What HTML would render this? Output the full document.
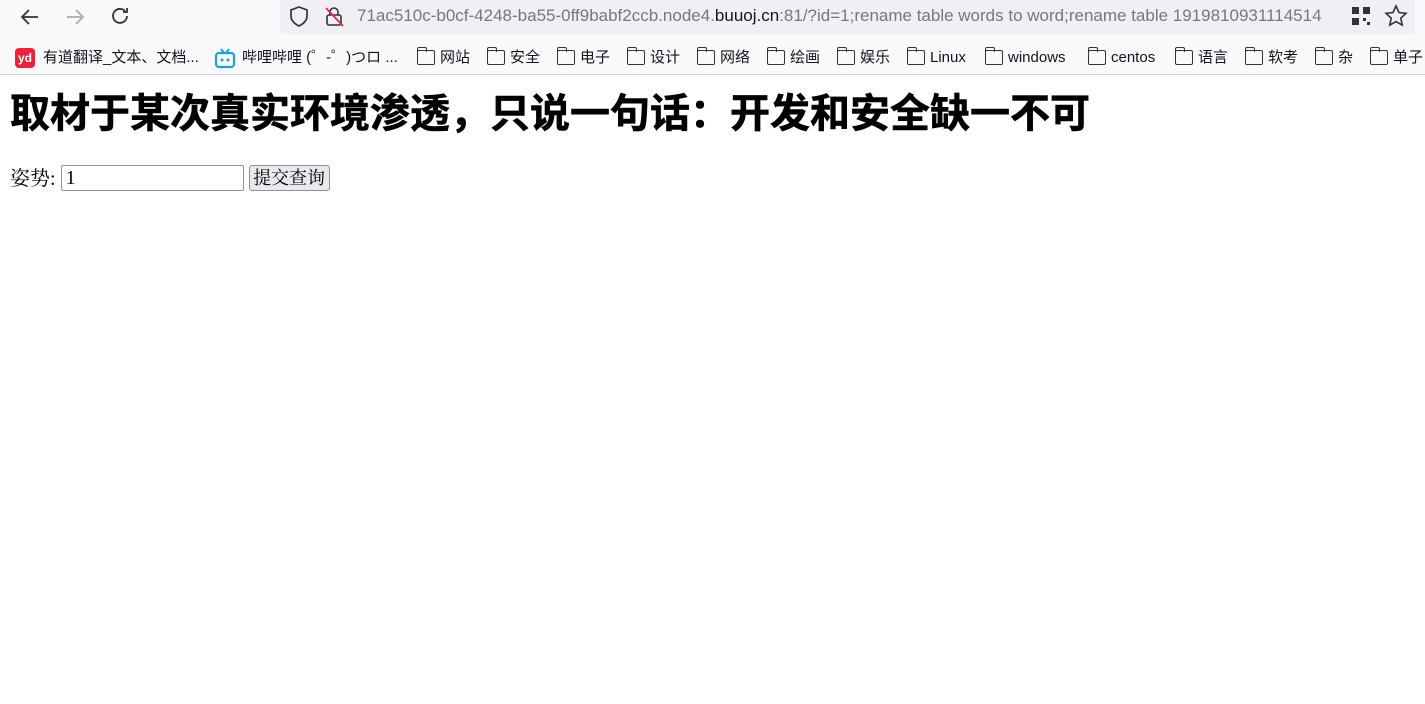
<!DOCTYPE html><html><head><meta charset="utf-8"><style>
*{margin:0;padding:0;box-sizing:border-box}
body{width:1425px;height:704px;overflow:hidden;background:#fff;font-family:"Liberation Sans","Noto Sans CJK SC",sans-serif;position:relative}
#top{position:absolute;left:0;top:0;width:1425px;height:40px;background:#f9f9fb}
#url{position:absolute;left:280px;top:0;width:1135px;height:34px;background:#f0f0f4;border-radius:0 0 6px 6px}
#bm{position:absolute;left:0;top:40px;width:1425px;height:35px;background:#f9f9fb;border-bottom:1px solid #d0d0d4}
.b{position:absolute;top:9px;font-size:15px;color:#15141a;white-space:nowrap;line-height:18px}
.f{position:absolute;top:10px;width:18px;height:15px;border:1.5px solid #333;border-radius:2px}
.f:before{content:"";position:absolute;left:-1.5px;top:-4px;width:8px;height:4px;border:1.5px solid #333;border-bottom:none;border-radius:2px 2px 0 0}
svg{position:absolute}
h1{position:absolute;left:10px;top:88px;font-size:40px;font-weight:bold;line-height:52px;white-space:nowrap;font-family:"Liberation Sans","Noto Sans CJK SC",sans-serif;-webkit-text-stroke:0.6px #000}
#form{position:absolute;left:10px;top:166px;font-size:20px;font-family:"Liberation Serif","Noto Serif CJK SC","Noto Sans CJK SC",serif;line-height:26px}
</style></head><body>
<div id="top"></div><div id="url"></div>
<svg style="left:18px;top:6px" width="24" height="22"><path d="M20 11H4M11 4l-7 7 7 7" stroke="#333" stroke-width="1.8" fill="none"/></svg>
<svg style="left:63px;top:6px" width="24" height="22"><path d="M4 11h16M13 4l7 7-7 7" stroke="#aaa" stroke-width="1.8" fill="none"/></svg>
<svg style="left:109px;top:5px" width="24" height="22"><path d="M18 11a7 7 0 1 1-2-5M18 3v4h-4" stroke="#333" stroke-width="1.8" fill="none"/></svg>
<svg style="left:288px;top:5px" width="22" height="24"><path d="M11 2l8 3v6c0 5-4 8-8 10-4-2-8-5-8-10V5z" stroke="#333" stroke-width="1.7" fill="none"/></svg>
<svg style="left:323px;top:5px" width="22" height="24"><rect x="4" y="10" width="14" height="10" rx="2" stroke="#333" stroke-width="1.6" fill="none"/><path d="M7 10V7a4 4 0 0 1 8 0v3" stroke="#333" stroke-width="1.6" fill="none"/><path d="M3 3l17 18" stroke="#e22850" stroke-width="1.8"/></svg>
<div style="position:absolute;left:357px;top:6px;font-size:17px;color:#777;white-space:nowrap;line-height:20px">71ac510c-b0cf-4248-ba55-0ff9babf2ccb.node4.<span style="color:#15141a">buuoj.cn</span>:81/?id=1;rename table words to word;rename table 1919810931114514</div>
<div style="position:absolute;left:1325px;top:0;width:20px;height:34px;background:linear-gradient(to right,rgba(240,240,244,0),#f0f0f4)"></div>
<div style="position:absolute;left:1345px;top:0;width:70px;height:34px;background:#f0f0f4"></div>
<svg style="left:1351px;top:6px" width="20" height="20"><path d="M1 1h7v7H1zM12 1h7v7h-7zM1 12h7v7H1zM12 12h3v3h-3zM16 16h3v3h-3z" fill="#333"/></svg>
<svg style="left:1384px;top:4px" width="24" height="24"><path d="M12 2l3 6.5 7 .8-5.2 4.8 1.4 7L12 17.6 5.8 21.1l1.4-7L2 9.3l7-.8z" stroke="#333" stroke-width="1.6" fill="none"/></svg>
<div id="bm">
<div style="position:absolute;left:15px;top:8px;width:20px;height:20px;background:#e8233a;border-radius:4px;color:#fff;font-size:12px;font-weight:bold;text-align:center;line-height:20px">yd</div>
<div class="b" style="left:43px">有道翻译_文本、文档...</div>
<svg style="left:214px;top:7px" width="22" height="22"><rect x="2" y="6" width="18" height="14" rx="3" stroke="#1ba1d6" stroke-width="2.2" fill="none"/><path d="M7 2l3 4M15 2l-3 4" stroke="#1ba1d6" stroke-width="2"/><circle cx="8" cy="13" r="1.5" fill="#1ba1d6"/><circle cx="14" cy="13" r="1.5" fill="#1ba1d6"/></svg>
<div class="b" style="left:242px">哔哩哔哩 (゜-゜)つロ ...</div>
<div class="f" style="left:417px"></div><div class="b" style="left:440px">网站</div>
<div class="f" style="left:487px"></div><div class="b" style="left:510px">安全</div>
<div class="f" style="left:557px"></div><div class="b" style="left:580px">电子</div>
<div class="f" style="left:627px"></div><div class="b" style="left:650px">设计</div>
<div class="f" style="left:697px"></div><div class="b" style="left:720px">网络</div>
<div class="f" style="left:767px"></div><div class="b" style="left:790px">绘画</div>
<div class="f" style="left:837px"></div><div class="b" style="left:860px">娱乐</div>
<div class="f" style="left:907px"></div><div class="b" style="left:930px">Linux</div>
<div class="f" style="left:985px"></div><div class="b" style="left:1008px">windows</div>
<div class="f" style="left:1088px"></div><div class="b" style="left:1111px">centos</div>
<div class="f" style="left:1175px"></div><div class="b" style="left:1198px">语言</div>
<div class="f" style="left:1245px"></div><div class="b" style="left:1268px">软考</div>
<div class="f" style="left:1315px"></div><div class="b" style="left:1338px">杂</div>
<div class="f" style="left:1370px"></div><div class="b" style="left:1393px">单子</div>
</div>
<h1>取材于某次真实环境渗透，只说一句话：开发和安全缺一不可</h1>
<div id="form">姿势: <span style="display:inline-block;vertical-align:middle;width:183px;height:26px;border:1px solid #8f8f9d;border-radius:2px;padding-left:4px;line-height:24px;margin-top:-4px">1</span> <span style="display:inline-block;vertical-align:middle;width:81px;height:26px;border:1px solid #8f8f9d;border-radius:3px;background:#e9e9ed;text-align:center;font-size:18px;line-height:24px;margin-top:-4px">提交查询</span></div>
</body></html>
